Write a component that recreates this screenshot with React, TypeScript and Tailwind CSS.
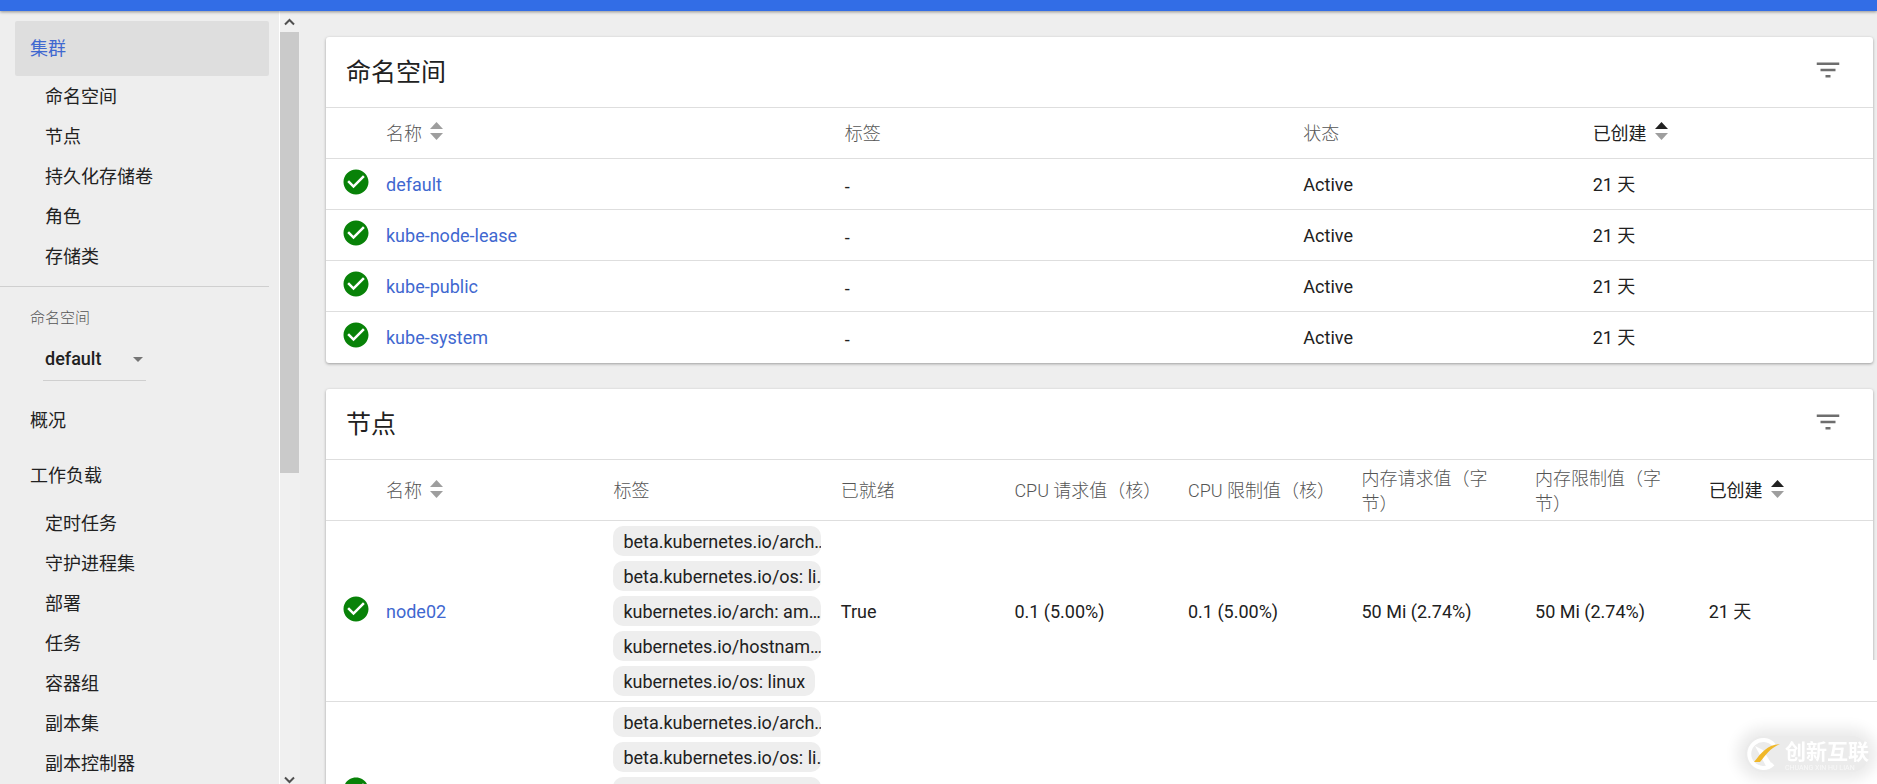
import type { ReactNode } from 'react';
import { MdCheckCircle, MdFilterList } from 'react-icons/md';

const clusterItems = ['命名空间', '节点', '持久化存储卷', '角色', '存储类'];
const workloadItems = ['定时任务', '守护进程集', '部署', '任务', '容器组', '副本集', '副本控制器'];
const namespaces = ['default', 'kube-node-lease', 'kube-public', 'kube-system'];

const nodeLabels = [
  'beta.kubernetes.io/arch…',
  'beta.kubernetes.io/os: li…',
  'kubernetes.io/arch: am…',
  'kubernetes.io/hostnam…',
  'kubernetes.io/os: linux',
];

const nodes = [
  { name: 'node02', ready: 'True', cpuReq: '0.1 (5.00%)', cpuLim: '0.1 (5.00%)', memReq: '50 Mi (2.74%)', memLim: '50 Mi (2.74%)' },
  { name: 'node01', ready: 'True', cpuReq: '0.1 (5.00%)', cpuLim: '0.1 (5.00%)', memReq: '50 Mi (2.74%)', memLim: '50 Mi (2.74%)' },
];

function SortIcon({ active = false }: { active?: boolean }) {
  return (
    <svg viewBox="0 0 13 18" className="mb-1 ml-2 h-[18px] w-[13px] shrink-0" aria-hidden="true">
      <path d="M6.5 0 L13 7 H0 Z" fill={active ? '#212121' : '#9e9e9e'} />
      <path d="M0 11 H13 L6.5 18 Z" fill="#9e9e9e" />
    </svg>
  );
}

function SortButton({ active = false, children }: { active?: boolean; children: ReactNode }) {
  return (
    <button type="button" className={active ? 'flex items-center text-[#212121]' : 'flex items-center font-light'}>
      {children}
      <SortIcon active={active} />
    </button>
  );
}

function NavItem({ children }: { children: ReactNode }) {
  return (
    <li>
      <a href="#" className="flex h-10 items-center pl-[45px]">
        {children}
      </a>
    </li>
  );
}

function Card({ title, children }: { title: string; children: ReactNode }) {
  return (
    <section className="rounded-[3px] bg-white shadow-[0_1px_3px_rgba(0,0,0,0.35)]">
      <header className="flex h-[70px] items-center justify-between pr-[30px] pl-5">
        <h2 className="pt-[2px] text-[25px] leading-8">{title}</h2>
        <button type="button" aria-label="筛选" className="mb-1 text-[#6e6e6e]">
          <MdFilterList className="size-[30px]" />
        </button>
      </header>
      {children}
    </section>
  );
}

function StatusCell() {
  return (
    <td className="pl-[15px]">
      <MdCheckCircle className="mb-1 size-[30px] text-[#088208]" />
    </td>
  );
}

export default function App() {
  return (
    <div className="flex h-screen flex-col overflow-hidden bg-[#eeeeee] font-[Roboto,'Noto_Sans_CJK_SC',sans-serif] text-lg leading-[25px] text-[#212121]">
      <div className="relative h-[11px] shrink-0 bg-[#326de6] shadow-[0_1px_3px_rgba(0,0,0,0.4)]" />

      <div className="flex min-h-0 flex-1">
        {/* Sidebar */}
        <nav className="w-[279px] shrink-0 overflow-hidden pt-[10px]">
          <a href="#" className="mr-[10px] ml-[15px] flex h-[55px] items-center rounded-[2px] bg-[#dedede] pl-[15px] text-[#3f68d0]">
            集群
          </a>
          <ul>
            {clusterItems.map((item) => (
              <NavItem key={item}>{item}</NavItem>
            ))}
          </ul>

          <div className="mt-[10px] mr-[10px] border-t border-[#cfcfcf] pt-[19px] pl-[30px]">
            <label htmlFor="namespace" className="block text-[15px] font-light text-[#555]">
              命名空间
            </label>
            <div className="relative mt-2 ml-[13px] h-[42px] w-[103px] border-b border-[#cfcfcf]">
              <select id="namespace" className="h-full w-full appearance-none bg-transparent pb-[2px] pl-[2px] font-medium outline-none">
                <option>default</option>
              </select>
              <svg viewBox="0 0 10 5" className="pointer-events-none absolute top-[18px] right-[3px] h-[5px] w-[10px]" aria-hidden="true">
                <path d="M0 0 H10 L5 5 Z" fill="#757575" />
              </svg>
            </div>
          </div>

          <a href="#" className="mt-3 flex h-[55px] items-center pl-[30px]">
            概况
          </a>
          <a href="#" className="flex h-[55px] items-center pl-[30px]">
            工作负载
          </a>
          <ul>
            {workloadItems.map((item) => (
              <NavItem key={item}>{item}</NavItem>
            ))}
          </ul>
        </nav>

        {/* Sidebar scrollbar */}
        <div className="flex w-[21px] shrink-0 flex-col border-l border-white bg-[#f0f0f0]">
          <svg viewBox="0 0 19 21" className="h-[21px] w-[19px] shrink-0" aria-hidden="true">
            <path d="M5 13.5 L9.5 9 L14 13.5" fill="none" stroke="#505050" strokeWidth="2" />
          </svg>
          <div className="h-[441px] w-[19px] bg-[#cacaca]" />
          <svg viewBox="0 0 19 10" className="mt-auto h-[10px] w-[19px] shrink-0" aria-hidden="true">
            <path d="M5 3.5 L9.5 8 L14 3.5" fill="none" stroke="#505050" strokeWidth="2" />
          </svg>
        </div>

        {/* Content */}
        <main className="flex min-w-0 flex-1 flex-col gap-[26px] overflow-hidden pt-[26px] pr-1 pl-[26px]">
          <Card title="命名空间">
            <table className="w-full table-fixed text-left">
              <colgroup>
                <col className="w-[60px]" />
                <col className="w-[29.65%]" />
                <col className="w-[29.65%]" />
                <col className="w-[18.7%]" />
                <col />
              </colgroup>
              <thead>
                <tr className="h-[51px] border-t border-[#dedede] text-[#555]">
                  <th />
                  <th className="font-light"><SortButton>名称</SortButton></th>
                  <th className="font-light">标签</th>
                  <th className="font-light">状态</th>
                  <th className="font-normal"><SortButton active>已创建</SortButton></th>
                </tr>
              </thead>
              <tbody>
                {namespaces.map((name) => (
                  <tr key={name} className="h-[51px] border-t border-[#dedede]">
                    <StatusCell />
                    <td><a href="#" className="text-[#3f68d0]">{name}</a></td>
                    <td className="pt-1">-</td>
                    <td>Active</td>
                    <td>21 天</td>
                  </tr>
                ))}
              </tbody>
            </table>
          </Card>

          <Card title="节点">
            <table className="w-full table-fixed text-left">
              <colgroup>
                <col className="w-[60px]" />
                <col className="w-[14.7%]" />
                <col className="w-[14.7%]" />
                <col className="w-[11.22%]" />
                <col className="w-[11.22%]" />
                <col className="w-[11.22%]" />
                <col className="w-[11.22%]" />
                <col className="w-[11.22%]" />
                <col />
              </colgroup>
              <thead>
                <tr className="h-[61px] border-t border-[#dedede] text-[#555] *:pt-[2px]">
                  <th />
                  <th className="font-light"><SortButton>名称</SortButton></th>
                  <th className="font-light">标签</th>
                  <th className="font-light">已就绪</th>
                  <th className="font-light">CPU 请求值（核）</th>
                  <th className="font-light">CPU 限制值（核）</th>
                  <th className="pr-8 font-light">内存请求值（字节）</th>
                  <th className="pr-8 font-light">内存限制值（字节）</th>
                  <th className="font-normal"><SortButton active>已创建</SortButton></th>
                </tr>
              </thead>
              <tbody>
                {nodes.map((node) => (
                  <tr key={node.name} className="border-t border-[#dedede]">
                    <StatusCell />
                    <td className="pt-[2px]"><a href="#" className="text-[#3f68d0]">{node.name}</a></td>
                    <td className="pr-5">
                      <ul className="flex flex-col items-start gap-[5px] py-[5px]">
                        {nodeLabels.map((label) => (
                          <li key={label} className="h-[30px] max-w-full overflow-hidden rounded-[10px] bg-[#eeeeee] px-[10px] leading-8 whitespace-nowrap">
                            {label}
                          </li>
                        ))}
                      </ul>
                    </td>
                    <td className="pt-[2px]">{node.ready}</td>
                    <td className="pt-[2px]">{node.cpuReq}</td>
                    <td className="pt-[2px]">{node.cpuLim}</td>
                    <td className="pt-[2px]">{node.memReq}</td>
                    <td className="pt-[2px]">{node.memLim}</td>
                    <td className="pt-[2px]">21 天</td>
                  </tr>
                ))}
              </tbody>
            </table>
          </Card>
        </main>
      </div>

      {/* Corner badge */}
      <div className="fixed right-0 bottom-0 flex h-[124px] w-1 flex-col bg-white">
        <div className="h-[42px] border-b border-[#dedede]" />
      </div>
      <div className="fixed right-2 bottom-3 flex items-center gap-1 rounded-full bg-[#ebebeb] text-white shadow-[0_0_14px_8px_#ebebeb]">
        <svg viewBox="0 0 36 34" className="h-[34px] w-[36px]" aria-hidden="true">
          <path d="M29 8 A14 14 0 1 0 28 27" fill="none" stroke="#fff" strokeWidth="4" />
          <path d="M10 9 L18 13 L28 29 H21 Z" fill="#fff" />
          <path d="M9 25 C17 15 22 8 35 7 C25 11 20 19 15 25 Z" fill="#f0b82a" />
        </svg>
        <div className="pt-1">
          <div className="text-[21px] leading-6 font-bold">创新互联</div>
          <div className="text-[7px] leading-2 text-[#f8f8f8]">CHUANG XIN HU LIAN</div>
        </div>
      </div>
    </div>
  );
}
